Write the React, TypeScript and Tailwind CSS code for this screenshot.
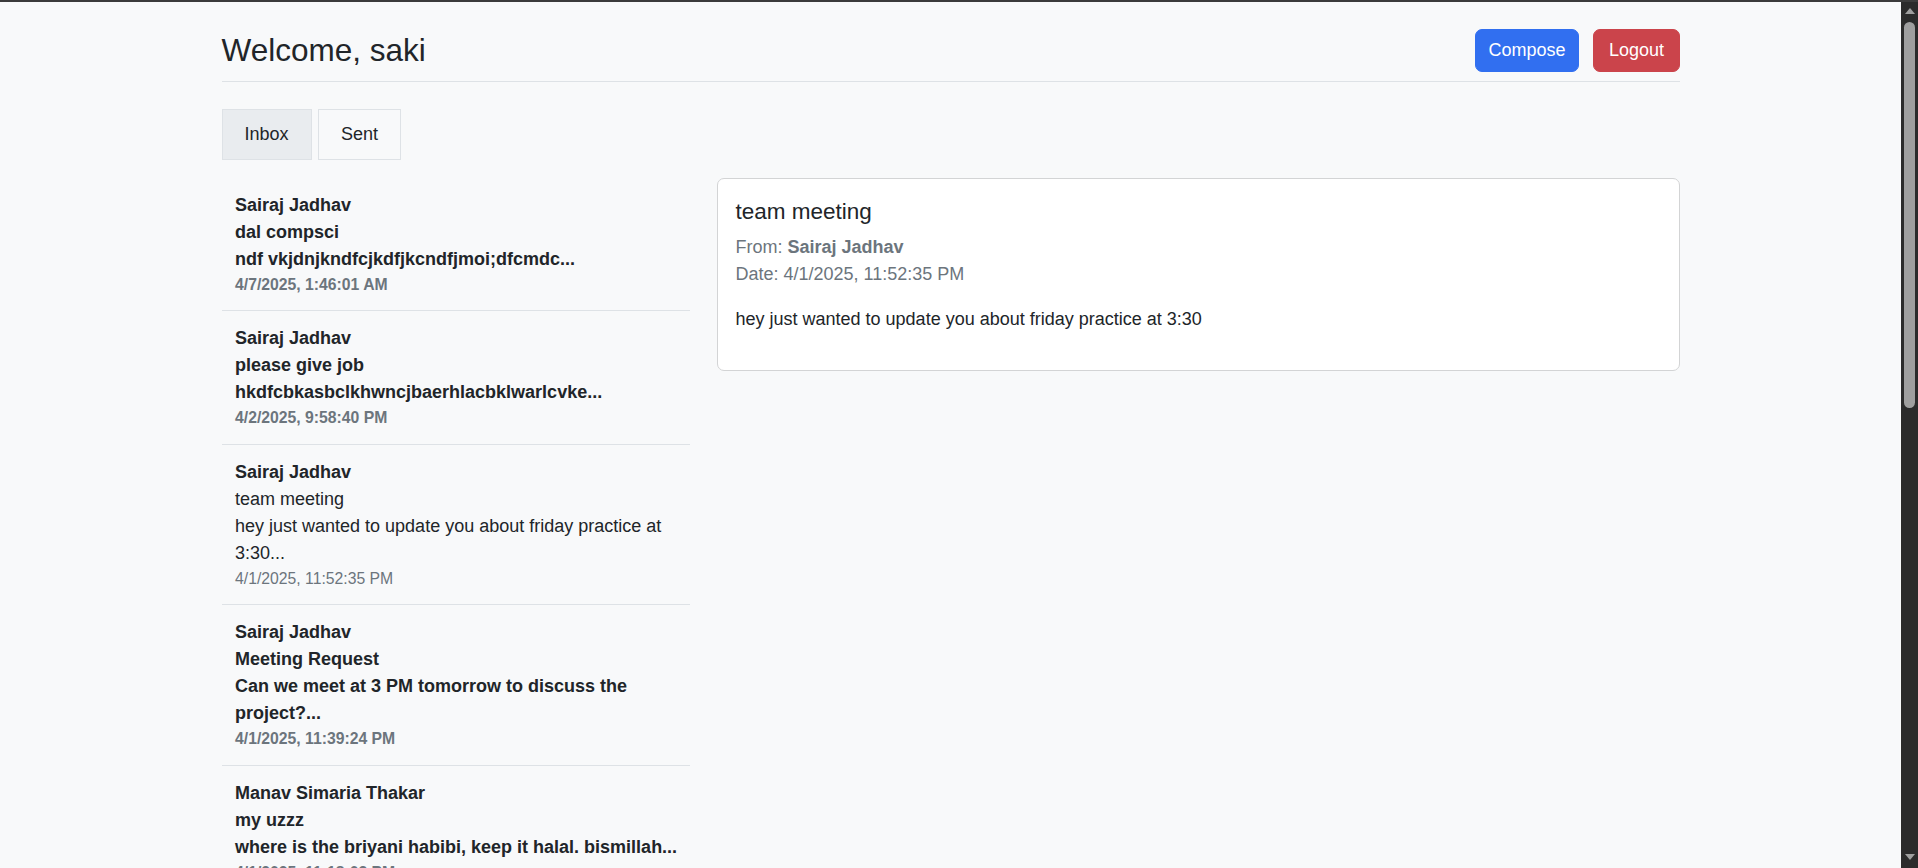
import React, { useState } from "react";

type Mail = {
  id: number;
  from: string;
  subject: string;
  preview: string[];
  date: string;
  unread: boolean;
};

const MAILS: Mail[] = [
  { id: 1, from: "Sairaj Jadhav", subject: "dal compsci", preview: ["ndf vkjdnjkndfcjkdfjkcndfjmoi;dfcmdc..."], date: "4/7/2025, 1:46:01 AM", unread: true },
  { id: 2, from: "Sairaj Jadhav", subject: "please give job", preview: ["hkdfcbkasbclkhwncjbaerhlacbklwarlcvke..."], date: "4/2/2025, 9:58:40 PM", unread: true },
  { id: 3, from: "Sairaj Jadhav", subject: "team meeting", preview: ["hey just wanted to update you about friday practice at", "3:30..."], date: "4/1/2025, 11:52:35 PM", unread: false },
  { id: 4, from: "Sairaj Jadhav", subject: "Meeting Request", preview: ["Can we meet at 3 PM tomorrow to discuss the", "project?..."], date: "4/1/2025, 11:39:24 PM", unread: true },
  { id: 5, from: "Manav Simaria Thakar", subject: "my uzzz", preview: ["where is the briyani habibi, keep it halal. bismillah..."], date: "4/1/2025, 11:18:03 PM", unread: true },
];

export default function App() {
  const [tab, setTab] = useState<"inbox" | "sent">("inbox");
  const [selectedId, setSelectedId] = useState(3);
  const selected = MAILS.find(m => m.id === selectedId) ?? MAILS[2];

  return (
    <div className="flex h-screen flex-col overflow-hidden bg-[#f8f9fa] font-['Liberation_Sans',Arial,sans-serif] text-[18px] leading-[27px] text-[#212529]">
      <div className="h-[2px] shrink-0 bg-[#3b3b3b]" />
      <div className="flex min-h-0 flex-1">
        <main className="min-w-0 flex-1 overflow-hidden">
          <div className="mx-auto w-[1458px] pt-[27px]">
            {/* Header */}
            <div className="mb-[27px] flex items-center justify-between border-b border-[#dee2e6] pb-[9px]">
              <h2 className="text-[31.5px] font-medium leading-[43px]">Welcome, saki</h2>
              <div className="flex gap-[14.5px]">
                <button className="rounded-[7px] border border-[#316ff0] bg-[#316ff0] px-[12.5px] py-[6.75px] text-white">Compose</button>
                <button className="rounded-[7px] border border-[#cb444b] bg-[#cb444b] px-[14.5px] py-[6.75px] text-white">Logout</button>
              </div>
            </div>

            {/* Tabs */}
            <div className="mb-[18px] flex gap-[6.5px]">
              <button
                onClick={() => setTab("inbox")}
                className={`border border-[#dee2e6] px-[22px] py-[10.85px] ${tab === "inbox" ? "bg-[#e9ecef]" : "bg-[#f8f9fa]"}`}
              >
                Inbox
              </button>
              <button
                onClick={() => setTab("sent")}
                className={`border border-[#dee2e6] px-[22px] py-[10.85px] ${tab === "sent" ? "bg-[#e9ecef]" : "bg-[#f8f9fa]"}`}
              >
                Sent
              </button>
            </div>

            <div className="flex gap-[27px]">
              {/* Message list */}
              <div className="w-[468px] shrink-0">
                {MAILS.map(m => (
                  <div
                    key={m.id}
                    onClick={() => setSelectedId(m.id)}
                    className={`cursor-pointer border-b border-[#dee2e6] px-[13.5px] py-[14px] ${m.unread ? "font-bold" : ""}`}
                  >
                    <div className="font-bold">{m.from}</div>
                    <div>{m.subject}</div>
                    {m.preview.map(line => (
                      <div key={line} className="whitespace-nowrap">{line}</div>
                    ))}
                    <div className="text-[15.75px] leading-[23.6px] text-[#6c757d]">{m.date}</div>
                  </div>
                ))}
              </div>

              {/* Detail */}
              <div className="min-w-0 flex-1 self-start">
                <div className="rounded-[7px] border border-[#d3d4d5] bg-white px-[18px] pt-[19px] pb-[19px]">
                  <h5 className="mb-[9px] text-[22.5px] font-medium leading-[27px]">{selected.subject}</h5>
                  <p className="text-[#6c757d]">
                    From: <strong className="font-bold">{selected.from}</strong>
                  </p>
                  <p className="mb-[18px] text-[#6c757d]">Date: {selected.date}</p>
                  <p className="mb-[18px]">hey just wanted to update you about friday practice at 3:30</p>
                </div>
              </div>
            </div>
          </div>
        </main>

        {/* Scrollbar */}
        <div className="flex w-[17px] shrink-0 flex-col items-center bg-[#2b2b2b] py-[6px]">
          <div className="h-0 w-0 border-x-[5px] border-b-[6px] border-x-transparent border-b-[#9f9f9f]" />
          <div className="mt-[8px] h-[386px] w-[11px] rounded-full bg-[#9f9f9f]" />
          <div className="flex-1" />
          <div className="mb-[2px] h-0 w-0 border-x-[5px] border-t-[6px] border-x-transparent border-t-[#9f9f9f]" />
        </div>
      </div>
    </div>
  );
}
